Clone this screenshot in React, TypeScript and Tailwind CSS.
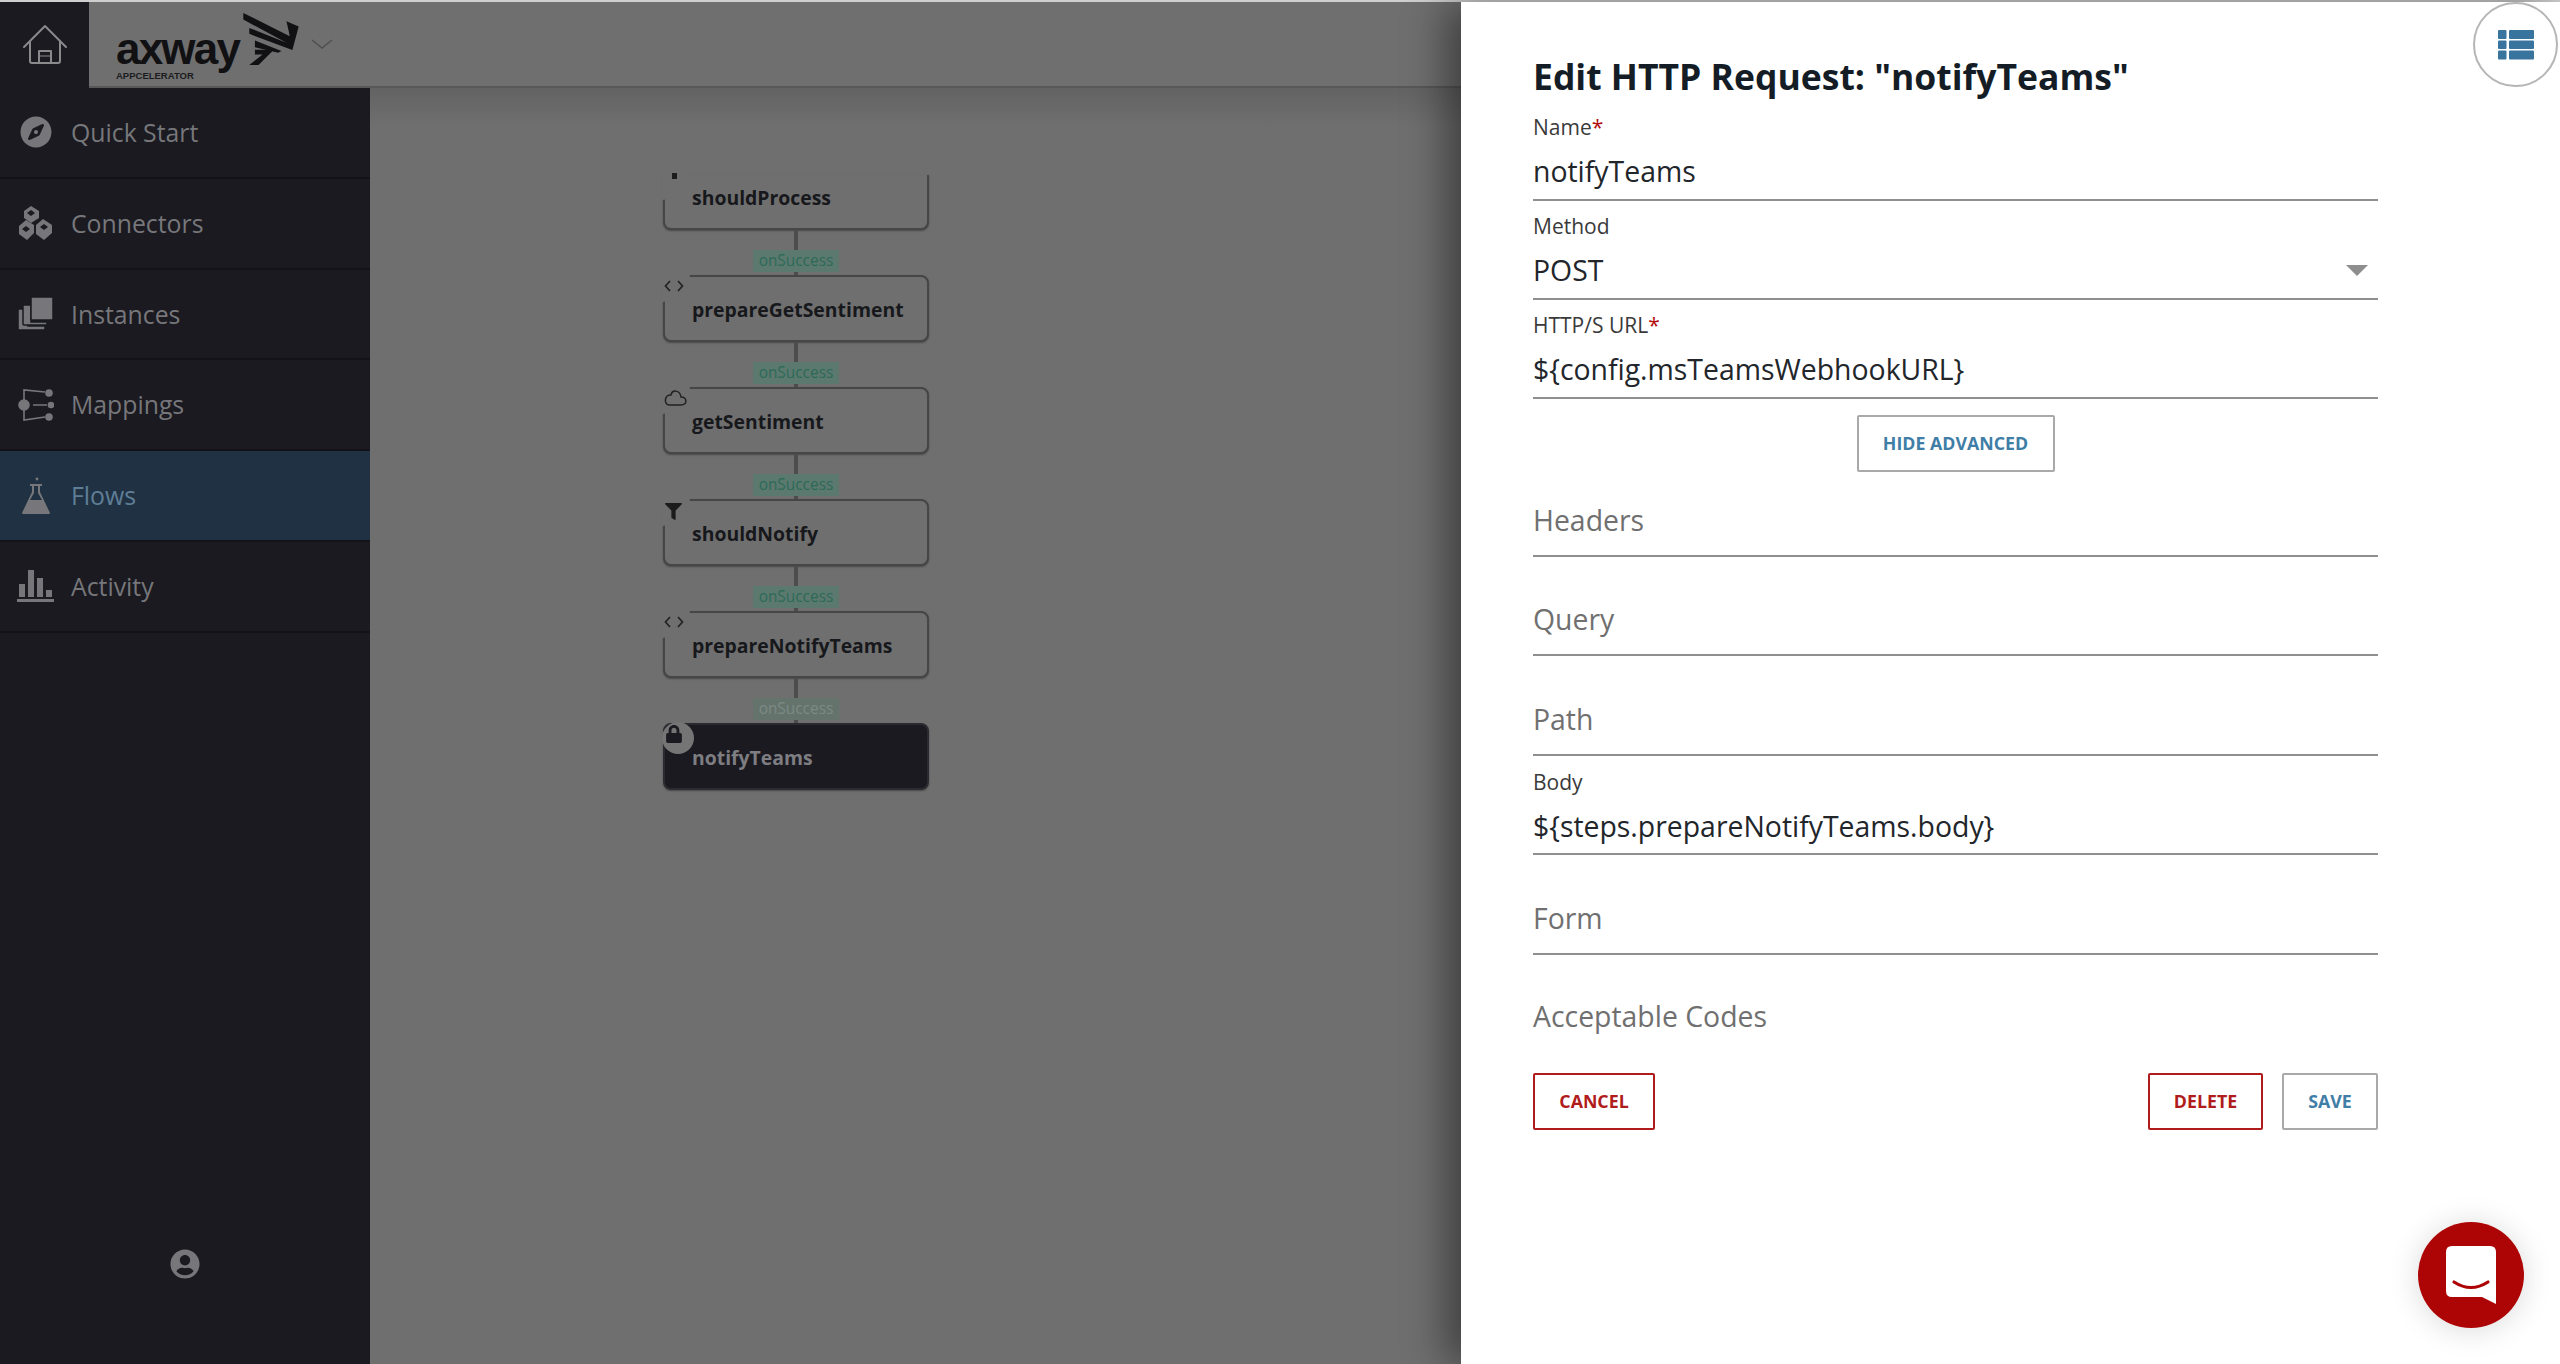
import React from "react";
import { FaCompass, FaFilter, FaLock, FaUserCircle } from "react-icons/fa";

const Home = () => (
  <svg width="44" height="42" viewBox="0 0 44 42" fill="none" stroke="#8a8a8d" strokeWidth="2" strokeLinejoin="round" strokeLinecap="round">
    <path d="M1 23 L22 2 L43 23" />
    <path d="M7 18 V37 Q7 39 9 39 H35 Q37 39 37 37 V18" />
    <path d="M16 39 V27 H28 V39" />
    <path d="M16 32 H28" strokeWidth="1.2" />
  </svg>
);

const Connectors = () => (
  <svg width="36" height="36" viewBox="0 0 36 36" fill="#77777b">
    <path d="M13 1 L21 6 V13 L13 18 L6 13 V6 Z" />
    <path d="M8 15 L16 20 V28 L9 35 L1 29 V21 Z" />
    <path d="M25 14 L34 20 V28 L26 35 L18 29 V20 Z" />
    <path d="M13 5 L17 8 L13 11 L9 8 Z M8 21 L12 24 L8 27 L4 24 Z" fill="#1a1a20" />
    <path d="M26 19 L30 22 L26 25 L22 22 Z" fill="#1a1a20" />
  </svg>
);

const Instances = () => (
  <svg width="38" height="36" viewBox="0 0 38 36" fill="#77777b" stroke="#1a1a20" strokeWidth="1.5">
    <path d="M1 13 H11 V30 H28 V34 H2 Q1 34 1 33 Z" />
    <path d="M6 9 H14 V26 H30 V29 H7 Q6 29 6 28 Z" />
    <rect x="14" y="1" width="22" height="23" rx="1" />
  </svg>
);

const Mappings = () => (
  <svg width="36" height="36" viewBox="0 0 36 36" fill="#77777b" stroke="#77777b" strokeWidth="1.6">
    <circle cx="6" cy="18" r="5" />
    <circle cx="31" cy="6" r="3" />
    <circle cx="33" cy="18" r="2.5" />
    <circle cx="31" cy="30" r="3" />
    <path d="M6 13 V3 L27 5 M15 18 H29 M6 23 V33 L27 30" fill="none" />
  </svg>
);

const Flask = () => (
  <svg width="30" height="38" viewBox="0 0 30 38" fill="#77777b">
    <circle cx="16" cy="2" r="1.4" />
    <path d="M9 7 H21 V9 H19 V15 L29 36 Q29 37 28 37 H2 Q1 37 1 36 L11 15 V9 H9 Z M13 9 V16 L9 23 H21 L17 16 V9 Z" fillRule="evenodd" />
  </svg>
);

const Bars = () => (
  <svg width="38" height="36" viewBox="0 0 38 36" fill="#77777b">
    <rect x="2" y="16" width="6" height="13" />
    <rect x="11" y="2" width="6" height="27" />
    <rect x="20" y="10" width="6" height="19" />
    <rect x="29" y="22" width="6" height="7" />
    <rect x="0" y="31" width="37" height="3" />
  </svg>
);

const Code = () => (
  <svg width="20" height="12" viewBox="0 0 20 12" fill="none" stroke="#222" strokeWidth="1.7">
    <path d="M6 1 L1.5 6 L6 11 M14 1 L18.5 6 L14 11" />
  </svg>
);

const Cloud = () => (
  <svg width="24" height="17" viewBox="0 0 24 17" fill="none" stroke="#222" strokeWidth="1.5">
    <path d="M6 16 H18 C25 16 24 8 18 8 C17 1 9 0 8 6 C2 5 0 15 6 16 Z" />
  </svg>
);

const Menu = () => (
  <svg width="36" height="30" viewBox="0 0 36 30" fill="#39749f">
    <rect x="0" y="0" width="8.5" height="9" rx="1" />
    <rect x="11" y="0" width="25" height="9" rx="1" />
    <rect x="0" y="10.5" width="8.5" height="8.5" rx="1" />
    <rect x="11" y="10.5" width="25" height="8.5" rx="1" />
    <rect x="0" y="20.5" width="8.5" height="9" rx="1" />
    <rect x="11" y="20.5" width="25" height="9" rx="1" />
  </svg>
);

const Chat = () => (
  <svg width="50" height="58" viewBox="0 0 50 58" fill="none">
    <path d="M6 0 H44 Q50 0 50 6 V58 L36 51 H6 Q0 51 0 45 V6 Q0 0 6 0 Z" fill="#ffffff" />
    <path d="M8 36 Q25 47 42 36" stroke="#ad0505" strokeWidth="3.2" strokeLinecap="round" />
  </svg>
);

const Bird = () => (
  <svg width="63" height="57" viewBox="420 30 190 170" fill="#111114" className="ml-[1px] mt-[9px]">
    <polygon points="430,35 570,105 567,90 560,60 597,76 578,147 448,98 448,80 560,125 430,55" />
    <polygon points="465,118 545,150 535,155 465,138" />
    <polygon points="465,146 522,146 476,192 448,192 488,160 465,160" />
  </svg>
);

const rows: { label: string; icon: React.ReactNode; active?: boolean }[] = [
  { label: "Quick Start", icon: <FaCompass size={32} color="#77777b" /> },
  { label: "Connectors", icon: <Connectors /> },
  { label: "Instances", icon: <Instances /> },
  { label: "Mappings", icon: <Mappings /> },
  { label: "Flows", icon: <Flask />, active: true },
  { label: "Activity", icon: <Bars /> },
];

function FlowNode({ name, badge, clipped, dark }: { name: string; badge?: React.ReactNode; clipped?: boolean; dark?: boolean }) {
  return (
    <div
      className={`relative w-[266px] border-2 rounded-b-[8px] flex items-center pl-[27px] font-bold text-[19.4px] ${
        clipped ? "h-[55px] border-t-0 pb-[10px]" : "h-[67px] rounded-t-[8px]"
      } ${dark ? "bg-[#1a1a20] border-[#2a2a30] text-[#7e7e82]" : "bg-[#6f6f6f] border-[#464646] text-[#17181c]"} shadow-[0_1px_2px_rgba(0,0,0,0.35)]`}
    >
      {badge && (
        <div
          className={`absolute -left-[3px] -top-[3px] flex items-start justify-start pl-[1px] pt-[1px] ${
            dark ? "w-[32px] h-[32px] rounded-full bg-[#757575]" : "w-[28px] h-[28px] rounded-br-full bg-[#6f6f6f]"
          }`}
        >
          {badge}
        </div>
      )}
      <span className="relative top-[1px]">{name}</span>
    </div>
  );
}

function Link({ faded }: { faded?: boolean }) {
  return (
    <div className="w-[266px] h-[45px] flex flex-col items-center relative">
      <div className="w-[4px] h-full bg-[#4d4d4d]" />
      <div
        className={`absolute top-[20px] left-[90px] w-[86px] h-[22px] flex items-center justify-center text-[15.4px] leading-none ${
          faded ? "bg-[#65736d] text-[#7c8a84]" : "bg-[#5c796f] text-[#2c6a58]"
        }`}
      >
        onSuccess
      </div>
    </div>
  );
}

function Field({ label, req, value, select, top = 11 }: { label: string; req?: boolean; value: string; select?: boolean; top?: number }) {
  return (
    <div className="h-[99px] flex flex-col border-b-2 border-[#8f8f8f]" style={{ paddingTop: top }}>
      <div className="h-[28px] text-[21px] leading-[28px] text-[#3a3a3a]">
        {label}
        {req && <span className="text-[#b30d0d]">*</span>}
      </div>
      <div className="mt-[10px] h-[40px] flex items-center justify-between text-[28.4px] leading-[40px] text-[#22262b]">
        <span>{value}</span>
        {select && <div className="mr-[10px] w-0 h-0 border-l-[11px] border-r-[11px] border-t-[11px] border-l-transparent border-r-transparent border-t-[#8e8e8e]" />}
      </div>
    </div>
  );
}

function Empty({ label, h }: { label: string; h: number }) {
  return (
    <div className="flex flex-col justify-end border-b-2 border-[#8f8f8f] pb-[15px] text-[28.4px] leading-[40px] text-[#707070]" style={{ height: h }}>
      {label}
    </div>
  );
}

function Btn({ label, w, red }: { label: string; w: string; red?: boolean }) {
  return (
    <div
      className={`${w} h-[57px] rounded-[2px] border-2 flex items-center justify-center bg-white text-[17.8px] font-bold ${
        red ? "border-[#b01c1c] text-[#b01c1c]" : "border-[#a9a9a9] text-[#3f7ea6]"
      }`}
    >
      {label}
    </div>
  );
}

export default function App() {
  return (
    <div className="w-[2560px] h-[1364px] overflow-hidden flex flex-col font-['Open_Sans',sans-serif] bg-[#6f6f6f]">
      <div className="h-[2px] bg-[#cfcfcf] shrink-0" />
      <div className="flex flex-1 min-h-0">
        <div className="w-[1461px] flex flex-col shrink-0">
          <header className="h-[86px] flex bg-[#6f6f6f] border-b-2 border-[#58585a] shrink-0">
            <div className="w-[89px] h-[86px] bg-[#1a1a20] flex items-center justify-center">
              <Home />
            </div>
            <div className="flex pl-[27px] items-start">
              <div className="flex flex-col font-['Liberation_Sans',sans-serif] font-bold text-[#111114]">
                <div className="mt-[25px] h-[44px] text-[44px] leading-[44px] tracking-[-1.8px]">axway</div>
                <div className="text-[9.5px] leading-[12px] mt-[-1px] text-[#1c1c20]">APPCELERATOR</div>
              </div>
              <Bird />
              <svg width="22" height="10" viewBox="0 0 22 10" fill="none" stroke="#505052" strokeWidth="1.6" className="ml-[8px] mt-[37px]">
                <path d="M1 1 L11 9 L21 1" />
              </svg>
            </div>
          </header>
          <div className="flex flex-1 min-h-0">
            <aside className="w-[370px] bg-[#1a1a20] flex flex-col shrink-0">
              {rows.map((r) => (
                <div
                  key={r.label}
                  className={`h-[90.8px] flex items-center border-b-2 border-[#131317] shrink-0 ${r.active ? "bg-[#1f3142] text-[#5f7e96]" : "text-[#77777b]"}`}
                >
                  <div className="w-[71px] flex justify-center shrink-0">{r.icon}</div>
                  <span className="text-[24.8px] leading-none">{r.label}</span>
                </div>
              ))}
              <div className="flex-1 flex items-end justify-center pb-[85px]">
                <FaUserCircle size={30} color="#77777b" />
              </div>
            </aside>
            <main className="flex-1 pt-[87px] pl-[293px] bg-gradient-to-b from-[#636363] via-[#6f6f6f] via-[3%] to-[#6f6f6f]">
              <div className="flex flex-col">
                <FlowNode
                  name="shouldProcess"
                  clipped
                  badge={<div className="w-[5px] h-[6px] bg-[#1c1c1c] ml-[9px]" />}
                />
                <Link />
                <FlowNode name="prepareGetSentiment" badge={<div className="mt-[5px] ml-[1px]"><Code /></div>} />
                <Link />
                <FlowNode name="getSentiment" badge={<div className="mt-[2px]"><Cloud /></div>} />
                <Link />
                <FlowNode name="shouldNotify" badge={<div className="ml-[2px] mt-[4px]"><FaFilter size={17} color="#1c1c1c" /></div>} />
                <Link />
                <FlowNode name="prepareNotifyTeams" badge={<div className="mt-[5px] ml-[1px]"><Code /></div>} />
                <Link faded />
                <FlowNode name="notifyTeams" dark badge={<div className="ml-[2px] mt-[2px]"><FaLock size={18} color="#1a1a20" /></div>} />
              </div>
            </main>
          </div>
        </div>
        <section className="relative z-10 flex-1 bg-white pl-[72px] pr-[182px] shadow-[-14px_0_40px_rgba(0,0,0,0.45)]">
          <h1 className="h-[100px] pt-[47px] text-[35.5px] leading-[54px] font-bold text-[#141d26]">Edit HTTP Request: "notifyTeams"</h1>
          <Field label="Name" req value="notifyTeams" />
          <Field label="Method" value="POST" select />
          <Field label="HTTP/S URL" req value="${config.msTeamsWebhookURL}" />
          <div className="mt-[16px] flex justify-center">
            <Btn label="HIDE ADVANCED" w="w-[198px]" />
          </div>
          <Empty label="Headers" h={85} />
          <Empty label="Query" h={99} />
          <Empty label="Path" h={100} />
          <Field label="Body" value="${steps.prepareNotifyTeams.body}" top={12} />
          <Empty label="Form" h={100} />
          <div className="mt-[41px] h-[40px] text-[28.4px] leading-[40px] text-[#707070]">Acceptable Codes</div>
          <div className="mt-[37px] flex items-center justify-between">
            <Btn label="CANCEL" w="w-[122px]" red />
            <div className="flex gap-[19px]">
              <Btn label="DELETE" w="w-[115px]" red />
              <Btn label="SAVE" w="w-[96px]" />
            </div>
          </div>
          <div className="absolute right-[2px] top-0 w-[85px] h-[85px] rounded-full border-2 border-[#b5b5b5] bg-white flex items-center justify-center">
            <Menu />
          </div>
          <div className="absolute right-[36px] top-[1220px] w-[106px] h-[106px] rounded-full bg-[#ad0505] flex items-center justify-center shadow-[0_2px_30px_rgba(0,0,0,0.15)]">
            <Chat />
          </div>
        </section>
      </div>
    </div>
  );
}
